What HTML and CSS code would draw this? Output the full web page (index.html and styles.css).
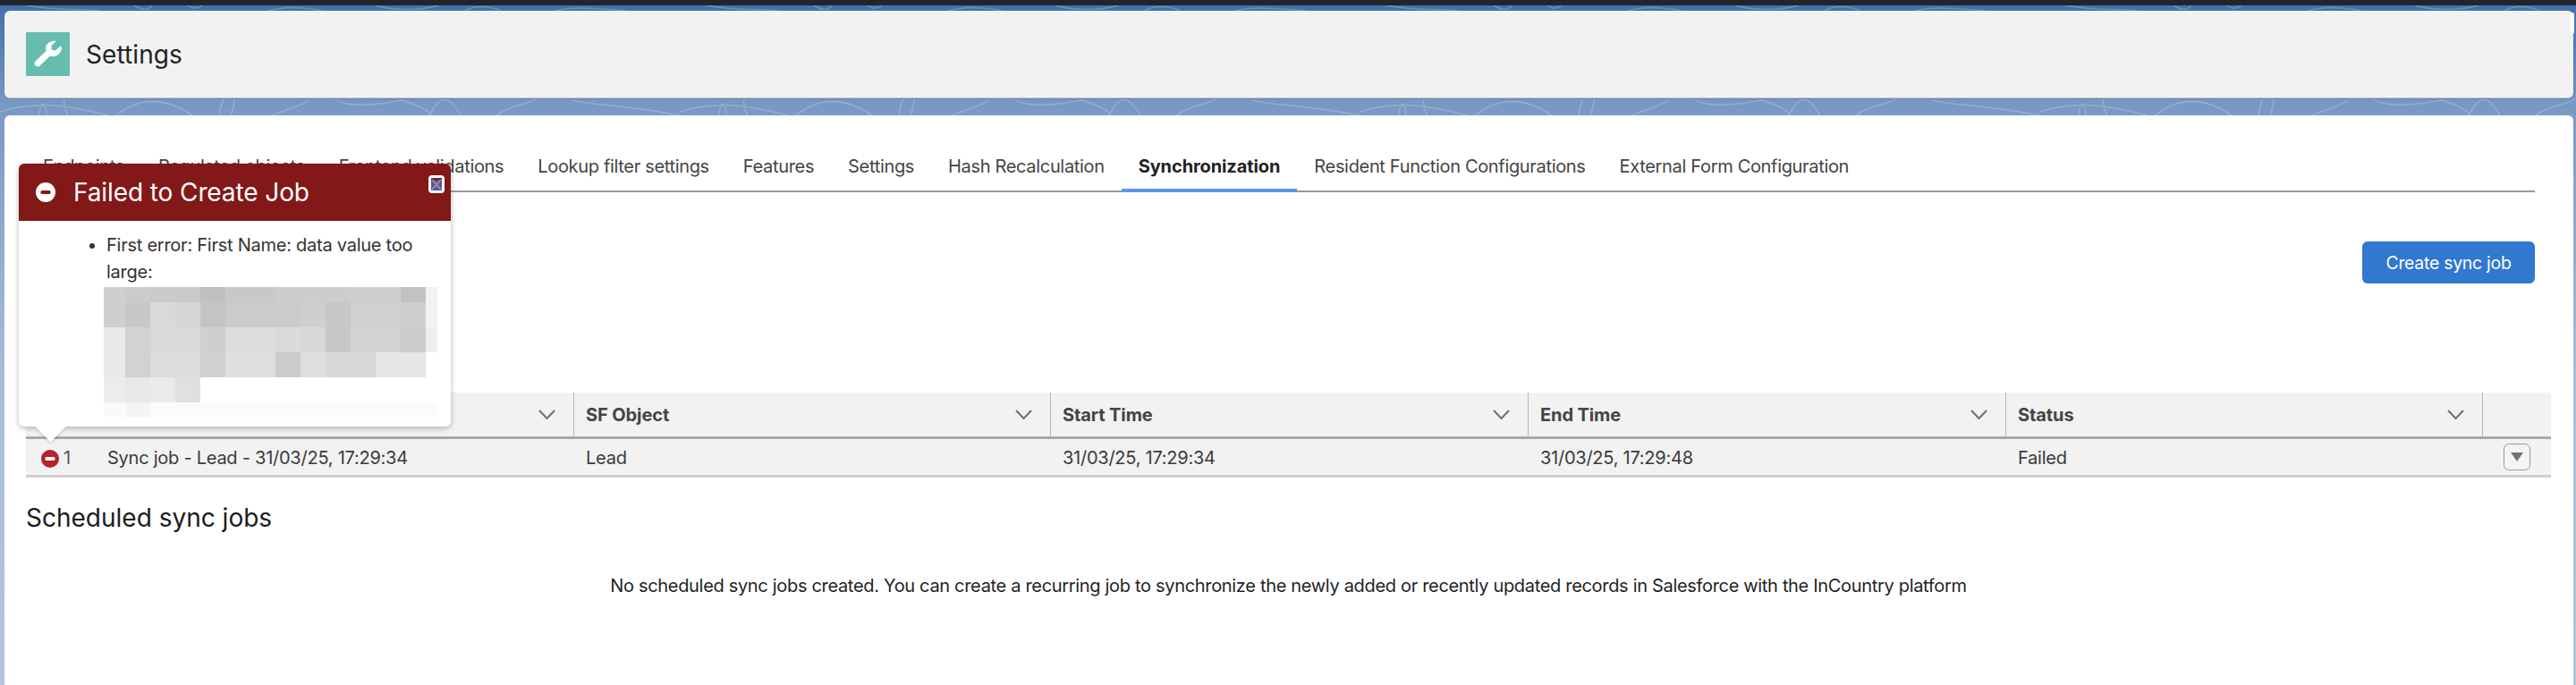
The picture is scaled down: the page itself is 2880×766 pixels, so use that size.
FILE: index.html
```html
<!DOCTYPE html>
<html lang="en">
<head>
<meta charset="utf-8">
<title>Settings</title>
<link rel="stylesheet" href="styles.css">
</head>
<body>
<svg class="swirls" width="2880" height="130" aria-hidden="true">
  <defs>
    <pattern id="swirl" width="760" height="130" patternUnits="userSpaceOnUse">
      <path d="M0 125C40 112 80 118 120 129M44 128C46 112 50 112 52 129M72 111C70 120 74 125 76 129M130 129C160 105 190 112 215 129M245 129C247 118 248 112 250 111M258 129C262 118 262 114 262 111M305 129C325 120 335 120 345 112M375 111C385 120 420 118 450 112C470 118 480 125 482 129M480 129C495 100 505 112 515 129M555 129C575 115 590 118 600 110M640 112C660 118 690 116 760 129" fill="none" stroke="#fff" stroke-opacity=".2" stroke-width="1.5"/>
      <path d="M30 6C60 12 90 10 110 12M150 6C160 12 165 12 170 6M210 6C215 10 220 10 226 6M300 12C320 6 340 8 360 12M420 6C440 12 470 12 490 6M520 12C530 6 545 6 560 12M620 12C640 8 650 8 700 12" fill="none" stroke="#fff" stroke-opacity=".22" stroke-width="1.5"/>
    </pattern>
  </defs>
  <rect width="2880" height="130" fill="url(#swirl)"/>
</svg>
<div class="topbar"></div>
<main class="page">
  <header class="title-card">
    <span class="title-icon">
      <svg viewBox="0 0 49 49" width="49" height="49"><path d="M10 33L22.5 21C21 15 24.5 10 32.5 9.5L33 10.5L28.5 15L28.5 19.5L33 20.5L38.5 15.5C39.8 16 40 17 39.8 18C39.5 24 33 29 27 26.5L15 38C12.5 40 8 36 10 33Z" fill="#fff"/></svg>
    </span>
    <h1 class="title">Settings</h1>
    <span class="title-sliver"></span>
  </header>

  <section class="content-card">
    <nav class="tabs">
      <a class="tab">Endpoints</a>
      <a class="tab">Regulated objects</a>
      <a class="tab">Frontend validations</a>
      <a class="tab">Lookup filter settings</a>
      <a class="tab">Features</a>
      <a class="tab">Settings</a>
      <a class="tab">Hash Recalculation</a>
      <a class="tab tab-active">Synchronization</a>
      <a class="tab">Resident Function Configurations</a>
      <a class="tab">External Form Configuration</a>
    </nav>

    <div class="toolbar">
      <button class="primary-btn">Create sync job</button>
    </div>

    <div class="grid-table">
      <div class="th"><span>Name</span><svg class="chev" viewBox="0 0 19 11"><path d="M1 1L9.5 10L18 1" /></svg></div>
      <div class="th"><span>SF Object</span><svg class="chev" viewBox="0 0 19 11"><path d="M1 1L9.5 10L18 1" /></svg></div>
      <div class="th"><span>Start Time</span><svg class="chev" viewBox="0 0 19 11"><path d="M1 1L9.5 10L18 1" /></svg></div>
      <div class="th"><span>End Time</span><svg class="chev" viewBox="0 0 19 11"><path d="M1 1L9.5 10L18 1" /></svg></div>
      <div class="th"><span>Status</span><svg class="chev" viewBox="0 0 19 11"><path d="M1 1L9.5 10L18 1" /></svg></div>
      <div class="th th-last"></div>

      <div class="td td-first">
        <svg class="row-icon" viewBox="0 0 20 20"><circle cx="10" cy="10" r="10" fill="#b4232a"/><rect x="4.5" y="8" width="11" height="4" rx="1.5" fill="#fff"/></svg>
        <span class="row-num">1</span>
        <span class="row-name">Sync job - Lead - 31/03/25, 17:29:34</span>
      </div>
      <div class="td">Lead</div>
      <div class="td">31/03/25, 17:29:34</div>
      <div class="td">31/03/25, 17:29:48</div>
      <div class="td">Failed</div>
      <div class="td td-action">
        <button class="row-menu"><svg viewBox="0 0 14 10" width="14" height="10"><path d="M0 0H14L7 10Z" fill="#737373"/></svg></button>
      </div>
    </div>

    <h2 class="sub-title">Scheduled sync jobs</h2>
    <p class="empty-msg">No scheduled sync jobs created. You can create a recurring job to synchronize the newly added or recently updated records in Salesforce with the InCountry platform</p>

    <aside class="popover">
      <div class="pop-head">
        <svg class="pop-icon" viewBox="0 0 22 22"><circle cx="11" cy="11" r="11" fill="#fff"/><rect x="5.5" y="9" width="11" height="4" rx="1.5" fill="#821818"/></svg>
        <span class="pop-title">Failed to Create Job</span>
        <button class="pop-close" aria-label="Close">
          <svg viewBox="0 0 18 20" width="18" height="20"><rect width="18" height="20" rx="4" fill="#fff"/><rect x="3" y="3" width="12" height="14" fill="#2465b2"/><rect x="3" y="3" width="12" height="2.5" fill="#6e2229"/><path d="M4 5L14 16M14 5L4 16" stroke="#c2777c" stroke-width="2.2"/></svg>
        </button>
      </div>
      <div class="pop-body">
        <ul class="pop-list">
          <li>First error: First Name: data value too large:
            <svg class="redacted" width="373" height="145" viewBox="0 0 373 145" shape-rendering="crispEdges" aria-hidden="true">
              <g>
                <rect x="0" width="24" height="17" fill="#cfcfcf"/><rect x="24" width="28" height="17" fill="#cbcbcb"/><rect x="52" width="28" height="17" fill="#cacaca"/><rect x="80" width="28" height="17" fill="#cacaca"/><rect x="108" width="28" height="17" fill="#c0c0c0"/><rect x="136" width="28" height="17" fill="#c8c8c8"/><rect x="164" width="28" height="17" fill="#c8c8c8"/><rect x="192" width="28" height="17" fill="#cdcdcd"/><rect x="220" width="28" height="17" fill="#cdcdcd"/><rect x="248" width="28" height="17" fill="#cdcdcd"/><rect x="276" width="28" height="17" fill="#cfcfcf"/><rect x="304" width="28" height="17" fill="#cfcfcf"/><rect x="332" width="28" height="17" fill="#c2c2c2"/><rect x="360" width="13" height="17" fill="#f2f2f2"/>
              </g>
              <g transform="translate(0 17)">
                <rect x="0" width="24" height="28" fill="#cfcfcf"/><rect x="24" width="28" height="28" fill="#c8c8c8"/><rect x="52" width="28" height="28" fill="#d9d9d9"/><rect x="80" width="28" height="28" fill="#d6d6d6"/><rect x="108" width="28" height="28" fill="#c4c4c4"/><rect x="136" width="28" height="28" fill="#cbcbcb"/><rect x="164" width="28" height="28" fill="#cbcbcb"/><rect x="192" width="28" height="28" fill="#cbcbcb"/><rect x="220" width="28" height="28" fill="#cfcfcf"/><rect x="248" width="28" height="28" fill="#c8c8c8"/><rect x="276" width="28" height="28" fill="#d0d0d0"/><rect x="304" width="28" height="28" fill="#d0d0d0"/><rect x="332" width="28" height="28" fill="#cfcfcf"/><rect x="360" width="13" height="28" fill="#f2f2f2"/>
              </g>
              <g transform="translate(0 45)">
                <rect x="0" width="24" height="28" fill="#e8e8e8"/><rect x="24" width="28" height="28" fill="#d2d2d2"/><rect x="52" width="28" height="28" fill="#dadada"/><rect x="80" width="28" height="28" fill="#dadada"/><rect x="108" width="28" height="28" fill="#cfcfcf"/><rect x="136" width="28" height="28" fill="#dcdcdc"/><rect x="164" width="28" height="28" fill="#dcdcdc"/><rect x="192" width="28" height="28" fill="#dadada"/><rect x="220" width="28" height="28" fill="#d8d8d8"/><rect x="248" width="28" height="28" fill="#c8c8c8"/><rect x="276" width="28" height="28" fill="#d2d2d2"/><rect x="304" width="28" height="28" fill="#d2d2d2"/><rect x="332" width="28" height="28" fill="#cccccc"/><rect x="360" width="13" height="28" fill="#eeeeee"/>
              </g>
              <g transform="translate(0 73)">
                <rect x="0" width="24" height="28" fill="#e8e8e8"/><rect x="24" width="28" height="28" fill="#d2d2d2"/><rect x="52" width="28" height="28" fill="#dcdcdc"/><rect x="80" width="28" height="28" fill="#dcdcdc"/><rect x="108" width="28" height="28" fill="#d0d0d0"/><rect x="136" width="28" height="28" fill="#dedede"/><rect x="164" width="28" height="28" fill="#dedede"/><rect x="192" width="28" height="28" fill="#cccccc"/><rect x="220" width="28" height="28" fill="#dedede"/><rect x="248" width="28" height="28" fill="#d8d8d8"/><rect x="276" width="28" height="28" fill="#d8d8d8"/><rect x="304" width="28" height="28" fill="#e6e6e6"/><rect x="332" width="28" height="28" fill="#e6e6e6"/>
              </g>
              <g transform="translate(0 101)">
                <rect x="0" width="24" height="28" fill="#ececec"/><rect x="24" width="28" height="28" fill="#e8e8e8"/><rect x="52" width="28" height="28" fill="#eaeaea"/><rect x="80" width="28" height="28" fill="#e0e0e0"/>
              </g>
              <g transform="translate(0 129)">
                <rect x="0" width="24" height="16" fill="#fafafa"/><rect x="24" width="28" height="16" fill="#f4f4f4"/><rect x="52" width="321" height="16" fill="#fbfbfb"/>
              </g>
            </svg>
          </li>
        </ul>
      </div>
      <span class="pop-arrow"></span>
    </aside>
  </section>
</main>
</body>
</html>
```
FILE: styles.css
```css
* { box-sizing: border-box; }
html, body { margin: 0; height: 766px; overflow: hidden; }
body {
  position: relative;
  font-family: Inter, "Liberation Sans", sans-serif;
  font-size: 20px;
  letter-spacing: -.25px;
  color: #2b2b2b;
  background: linear-gradient(180deg, #3f6cab 0, #4573ae 14px, #7597c2 112px, #7a9bc5 130px, #a9bcdb 420px, #b2c4e0 766px);
}
.swirls { position: absolute; left: 0; top: 0; }
.topbar { position: relative; height: 6px; background: #22262c; }
.page { position: relative; padding: 6px 3px 0 5px; }

.title-card {
  position: relative;
  height: 98px;
  display: flex;
  align-items: center;
  gap: 18px;
  padding-left: 24px;
  background: #f2f2f2;
  border-radius: 6px;
  border-bottom: 1px solid #c4c4c4;
  box-shadow: 0 0 2px rgba(40, 60, 90, .45);
}
.title-icon {
  width: 49px;
  height: 49px;
  margin-top: -1px;
  background: #67bcb0;
  border-radius: 1px;
  flex: none;
}
.title-icon svg { display: block; }
.title { margin: 0; font-size: 28px; font-weight: 400; color: #222; letter-spacing: .1px; }
.title-sliver {
  position: absolute;
  right: -1px;
  top: 2px;
  width: 4px;
  height: 24px;
  background: #fff;
  border-radius: 2px;
}

.content-card {
  position: relative;
  margin-top: 19px;
  height: 637px;
  padding: 0 25px 0 24px;
  background: #fff;
  border-radius: 6px 6px 0 0;
}

.tabs {
  display: flex;
  height: 86px;
  margin-right: 18px;
  padding-top: 36px;
  border-bottom: 2px solid #9a9a9a;
}
.tab {
  padding: 0 19px;
  height: 50px;
  line-height: 42px;
  color: #444;
  white-space: nowrap;
  letter-spacing: -.33px;
}
.tab-active {
  font-weight: 700;
  color: #222;
  letter-spacing: -.1px;
  border-bottom: 4px solid #5a96ee;
}

.toolbar {
  display: flex;
  justify-content: flex-end;
  margin: 55px 18px 0 0;
}
.primary-btn {
  width: 193px;
  height: 47px;
  padding: 0;
  border: 0;
  border-radius: 6px;
  background: #3078d0;
  color: #fff;
  font: 400 19.5px Inter, "Liberation Sans", sans-serif;
  letter-spacing: -.3px;
}

.grid-table {
  display: grid;
  grid-template-columns: 613px 533px 534px 534px 533px 76px;
  grid-template-rows: 52px 43px;
  margin-top: 122px;
  color: #3a3a3a;
}
.th {
  display: flex;
  align-items: center;
  justify-content: space-between;
  padding: 0 20px 0 13px;
  background: #f2f2f2;
  font-weight: 700;
  color: #444;
  letter-spacing: -.1px;
  border-right: 1px solid #b5b5b5;
  border-bottom: 3px solid #a8a8a8;
}
.th-last { border-right: 0; }
.chev { width: 19px; height: 11px; flex: none; }
.chev path { fill: none; stroke: #6e6e6e; stroke-width: 2; }
.td {
  display: flex;
  align-items: center;
  padding: 2px 13px 0;
  background: #f2f2f2;
  border-bottom: 3px solid #cfcfcf;
}
.td-first { padding-left: 17px; }
.row-icon { width: 20px; height: 20px; margin-top: 2px; flex: none; }
.row-num { width: 49px; margin-left: 5px; color: #555; }
.td-action { justify-content: flex-end; padding: 0 23px 0 13px; }
.row-menu {
  display: flex;
  align-items: center;
  justify-content: center;
  width: 30px;
  height: 30px;
  padding: 0;
  background: #f4f4f4;
  border: 1.5px solid #9b9b9b;
  border-radius: 6px;
}

.sub-title {
  margin: 28px 0 0;
  font-size: 28px;
  line-height: 34px;
  font-weight: 400;
  color: #1c1c1c;
  letter-spacing: 0;
}
.empty-msg {
  margin: 45px 0 0;
  line-height: 28px;
  text-align: center;
  color: #1f1f1f;
  letter-spacing: -.32px;
}

.popover {
  position: absolute;
  left: 16px;
  top: 54px;
  width: 483px;
  height: 294px;
  background: #fff;
  border-radius: 6px;
  box-shadow: 0 2px 6px rgba(0, 0, 0, .28);
  z-index: 2;
}
.pop-head {
  position: relative;
  display: flex;
  align-items: center;
  height: 64px;
  padding-left: 19px;
  background: #821818;
  border-radius: 6px 6px 0 0;
  color: #fff;
}
.pop-icon { width: 22px; height: 22px; flex: none; }
.pop-title { margin-left: 20px; font-size: 28px; letter-spacing: -.1px; }
.pop-close {
  position: absolute;
  left: 458px;
  top: 13px;
  width: 18px;
  height: 20px;
  padding: 0;
  border: 0;
  background: none;
}
.pop-close svg { display: block; }
.pop-body { padding-top: 13px; }
.pop-list { margin: 0; padding: 0 20px 0 98px; line-height: 29.5px; color: #333; }
.redacted { display: block; margin: 2px 0 0 -3px; }
.pop-arrow {
  position: absolute;
  left: 23px;
  top: 281px;
  width: 25px;
  height: 25px;
  background: #fff;
  transform: rotate(45deg);
  box-shadow: 3px 3px 4px -2px rgba(0, 0, 0, .18);
}
```
